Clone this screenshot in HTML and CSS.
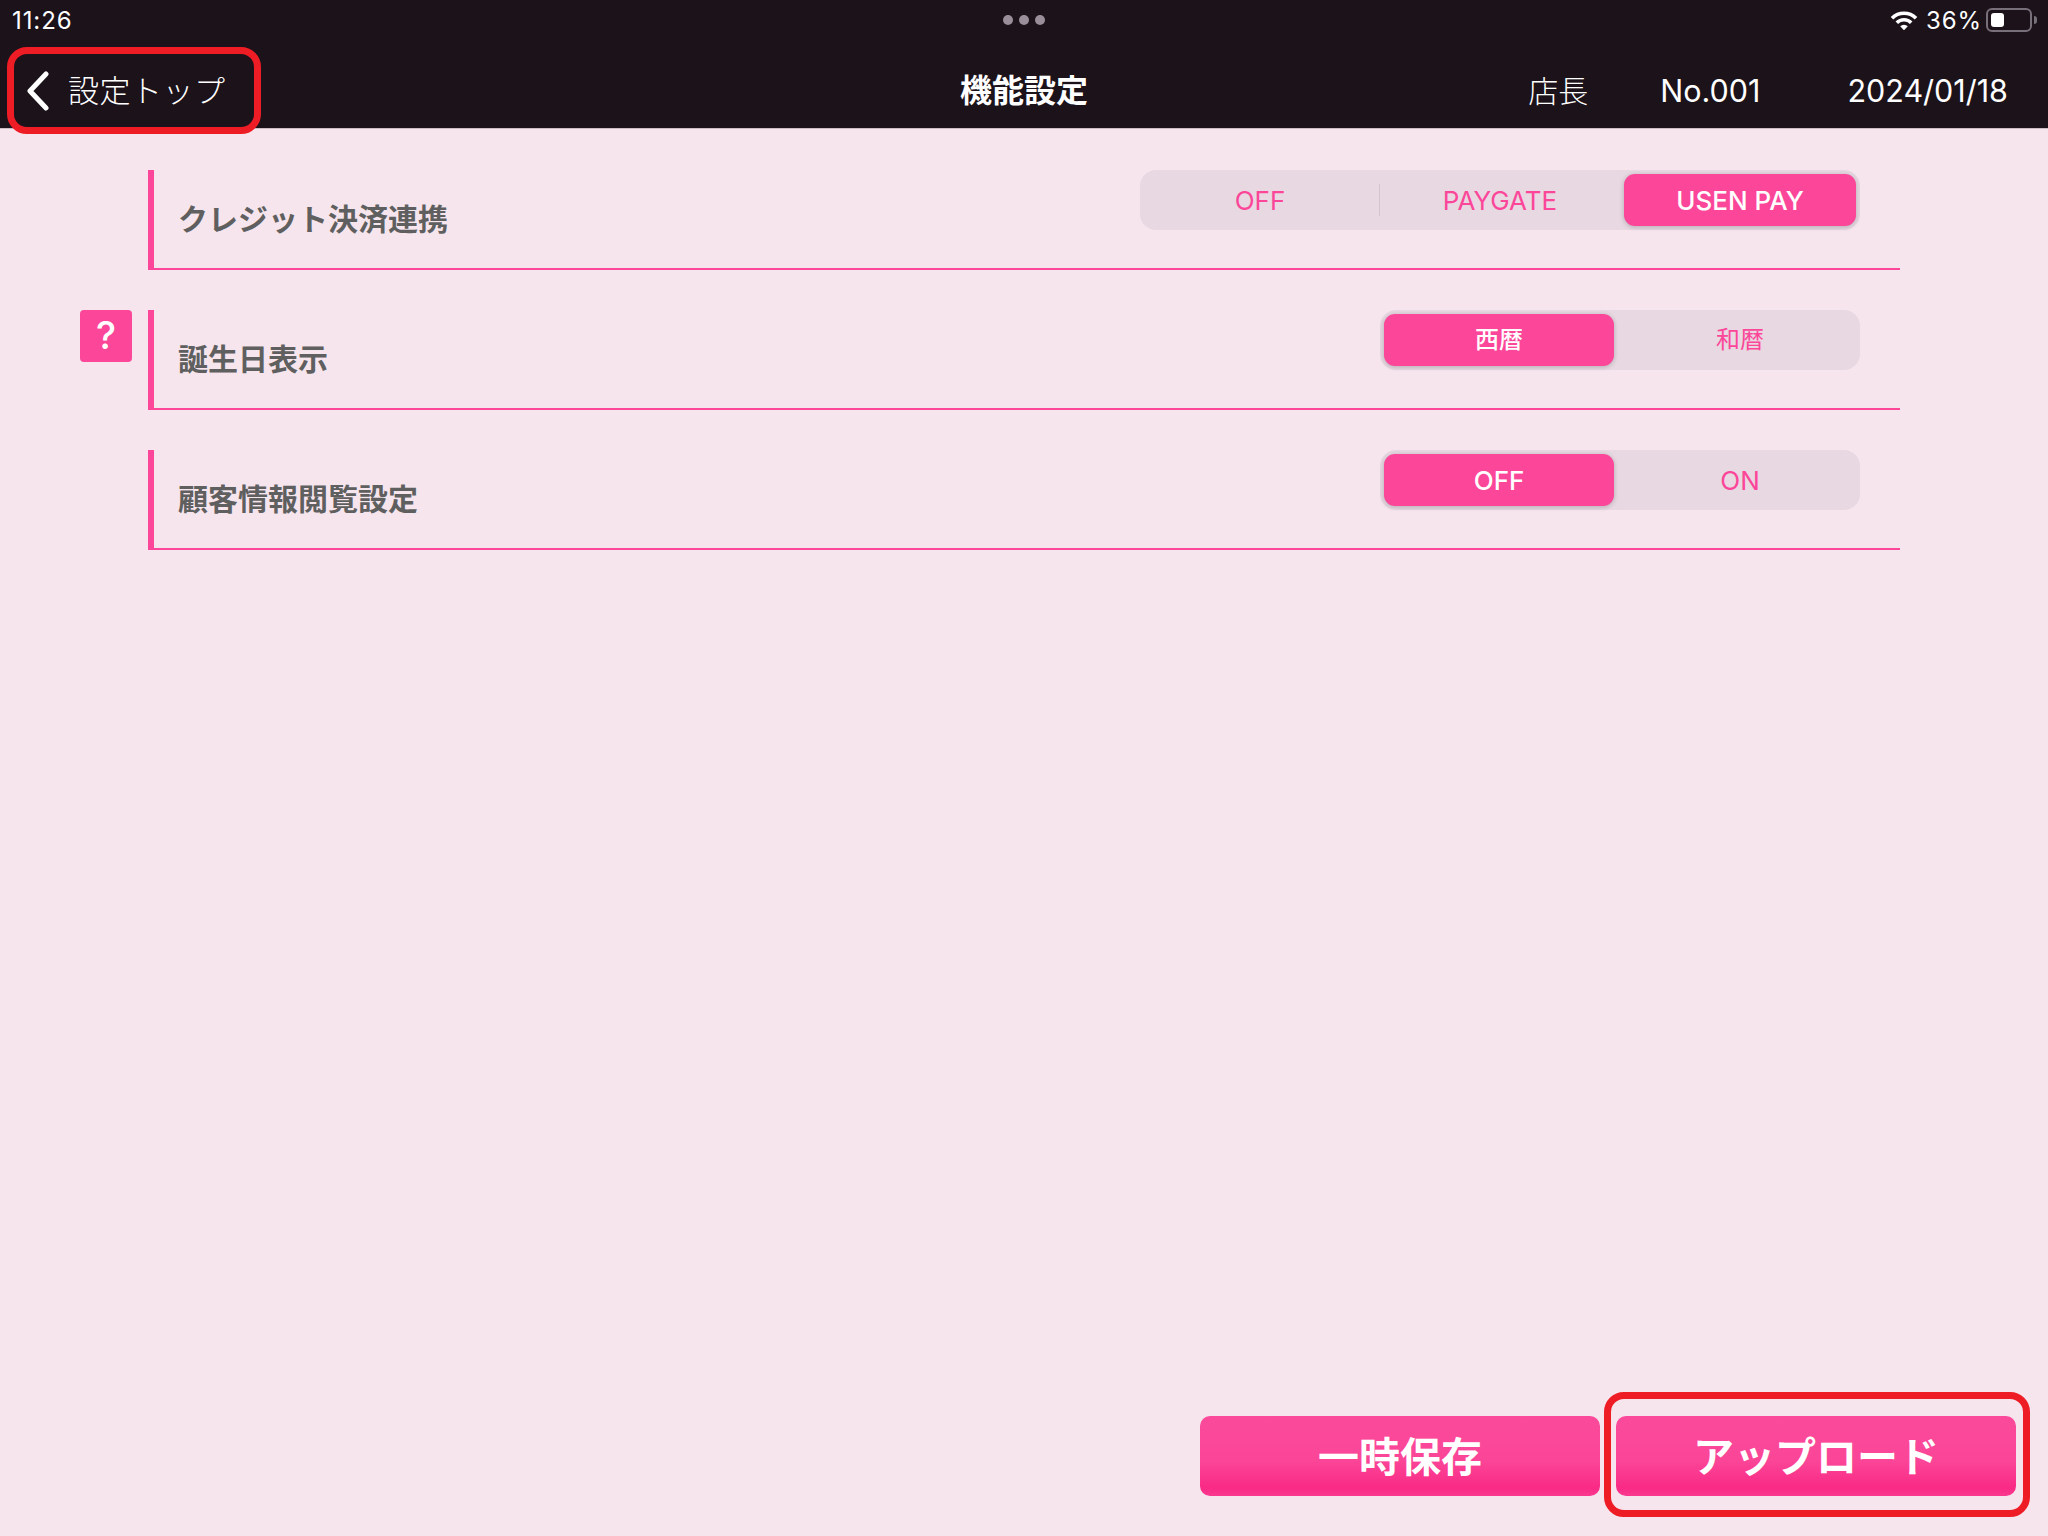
FILE: index.html
```html
<!DOCTYPE html>
<html lang="ja">
<head>
    <meta charset="UTF-8">
    <title>機能設定</title>
    <link rel="stylesheet" href="styles.css">
</head>
<body>

    <header class="top">
        <div class="status-bar">
            <span class="time">11:26</span>
            <div class="dots"><i></i><i></i><i></i></div>
            <div class="status-right">
                <svg class="wifi" width="28" height="20" viewBox="0 0 28 20">
                    <path d="M2 8.200A17 17 0 0 1 26 8.200" fill="none" stroke="#fff" stroke-width="3.600"/>
                    <path d="M6.800 12.800A10.200 10.200 0 0 1 21.200 12.800" fill="none" stroke="#fff" stroke-width="3.600"/>
                    <path d="M14 20.300L10.200 16.200A5.400 5.400 0 0 1 17.800 16.200Z" fill="#fff"/>
                </svg>
                <span class="battery-text">36%</span>
                <div class="battery"><div class="battery-fill"></div></div>
                <div class="battery-nub"></div>
            </div>
        </div>
        <nav class="nav">
            <a href="#" class="back">
                <svg width="24" height="40" viewBox="0 0 24 40">
                    <path d="M20 3 L4 20 L20 37" fill="none" stroke="#fff" stroke-width="5" stroke-linecap="round" stroke-linejoin="round"/>
                </svg>
                <span>設定トップ</span>
            </a>
            <h1 class="title">機能設定</h1>
            <div class="info">
                <span class="info-role">店長</span>
                <span>No.001</span>
                <span class="info-date">2024/01/18</span>
            </div>
        </nav>
    </header>

    <main class="settings">
        <section class="row">
            <h2>クレジット決済連携</h2>
            <div class="seg">
                <button>OFF</button>
                <button class="divided">PAYGATE</button>
                <button class="on">USEN PAY</button>
            </div>
        </section>
        <section class="row">
            <a href="#" class="help">?</a>
            <h2>誕生日表示</h2>
            <div class="seg">
                <button class="on kanji">西暦</button>
                <button class="kanji">和暦</button>
            </div>
        </section>
        <section class="row">
            <h2>顧客情報閲覧設定</h2>
            <div class="seg">
                <button class="on">OFF</button>
                <button>ON</button>
            </div>
        </section>
    </main>

    <footer class="actions">
        <button>一時保存</button>
        <button>アップロード</button>
    </footer>

    <!-- red annotation frames -->
    <div class="mark mark-back"></div>
    <div class="mark mark-upload"></div>

</body>
</html>
```

FILE: styles.css
```css
* {
    margin: 0;
    padding: 0;
    box-sizing: border-box;
    font-family: Inter, "Noto Sans CJK JP", sans-serif;
}

body {
    position: relative;
    display: flex;
    flex-direction: column;
    height: 100vh;
    overflow: hidden;
    background: #f6e5ed;
    color: #555;
}

/* Header */
.top {
    height: 129px;
    background: #1b121a;
    border-bottom: 1px solid #cdbcc6;
    color: #fff;
}

.status-bar {
    position: relative;
    display: flex;
    justify-content: space-between;
    align-items: center;
    height: 40px;
    padding: 0 11px 0 12px;
    font-size: 24px;
    letter-spacing: 0.9px;
}

.dots {
    display: flex;
    gap: 6px;
    position: absolute;
    left: 1003px;
    top: 15px;
}

.dots i {
    width: 10px;
    height: 10px;
    border-radius: 50%;
    background: #9a8e9a;
}

.status-right {
    display: flex;
    align-items: center;
}

.battery-text {
    margin-left: 8px;
}

.battery {
    width: 46px;
    height: 24px;
    margin-left: 4px;
    padding: 3px;
    border: 2px solid #77707a;
    border-radius: 6px;
}

.battery-fill {
    width: 13px;
    height: 100%;
    background: #fff;
    border-radius: 3px;
}

.battery-nub {
    width: 3px;
    height: 8px;
    margin-left: 2px;
    background: #77707a;
    border-radius: 0 3px 3px 0;
}

.nav {
    display: grid;
    grid-template-columns: 1fr auto 1fr;
    align-items: center;
    height: 88px;
    padding: 13px 40px 0;
    line-height: 40px;
}

.back {
    display: flex;
    align-items: center;
    gap: 18px;
    margin-left: -15px;
    color: #fff;
    text-decoration: none;
    font-size: 31px;
    font-weight: 300;
    letter-spacing: 0.5px;
}

.back svg {
    margin-left: 1px;
}

.title {
    font-size: 32px;
    font-weight: 700;
}

.info {
    display: flex;
    justify-content: flex-end;
    align-items: center;
    gap: 72px;
    font-size: 30.500px;
}

.info-role {
    font-size: 30px;
    font-weight: 300;
}

.info-date {
    margin-left: 15px;
}

/* Settings rows */
.settings {
    padding: 41px 148px 0;
}

.row {
    position: relative;
    display: flex;
    justify-content: space-between;
    height: 100px;
    margin-bottom: 40px;
    padding-right: 40px;
    border-left: 6px solid #fc4699;
    border-bottom: 2px solid #fc4699;
}

.row h2 {
    padding: 25px 0 0 24px;
    font-size: 30px;
    font-weight: 700;
    color: #5f5f5f;
}

.help {
    position: absolute;
    left: -74px;
    top: 0;
    width: 52px;
    height: 52px;
    background: #fc4699;
    border-radius: 4px;
    color: #fff;
    text-align: center;
    text-decoration: none;
    font-size: 38px;
    font-weight: 500;
    line-height: 50px;
}

.seg {
    display: flex;
    height: 60px;
    background: #e7d8e1;
    border-radius: 16px;
}

.seg button {
    position: relative;
    width: 240px;
    border: none;
    background: none;
    color: #fc4699;
    font-size: 26px;
}

.seg button.kanji {
    padding-bottom: 5px;
    font-size: 24px;
}

.seg button.divided::before {
    content: "";
    position: absolute;
    left: -1px;
    top: 14px;
    width: 1px;
    height: 32px;
    background: #d3c5cf;
}

.seg button.on {
    margin: 4px;
    width: 232px;
    background: #fc4699;
    color: #fff;
    font-weight: 500;
    border-radius: 11px;
    box-shadow: 0 1px 5px rgba(0, 0, 0, 0.22);
}

.seg button.on:first-child {
    width: 230px;
    margin-right: 6px;
}

/* Bottom buttons */
.actions {
    display: flex;
    justify-content: flex-end;
    gap: 16px;
    margin-top: auto;
    padding: 0 32px 40px 0;
}

.actions button {
    width: 400px;
    height: 80px;
    padding-bottom: 5px;
    border: none;
    border-radius: 10px;
    background: linear-gradient(#fb4a9b 0%, #fb4698 55%, #f92a85 90%, #f93a90 100%);
    color: #fff;
    font-size: 41px;
    font-weight: 700;
}

/* Annotation frames */
.mark {
    position: absolute;
    border: 7px solid #ee1c25;
    border-radius: 20px;
}

.mark-back {
    left: 7px;
    top: 47px;
    width: 254px;
    height: 87px;
}

.mark-upload {
    left: 1604px;
    top: 1392px;
    width: 426px;
    height: 125px;
}
```
